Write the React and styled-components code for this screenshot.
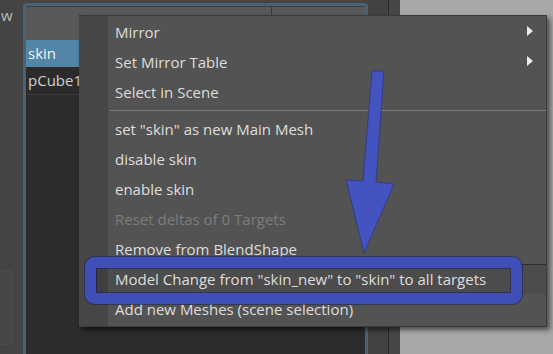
import React from "react";
import styled, { createGlobalStyle } from "styled-components";

const Global = createGlobalStyle`
  html, body { margin: 0; padding: 0; background: #444; }
  body { font-family: "Open Sans", "Noto Sans", sans-serif; }
`;

const Page = styled.div`
  position: relative;
  display: flex;
  width: 553px;
  height: 354px;
  overflow: hidden;
  background: #444444;
  font-family: "Open Sans", "Noto Sans", sans-serif;
`;

const LeftStrip = styled.div`
  width: 23px;
  flex: none;
  display: flex;
  flex-direction: column;
  justify-content: space-between;
  padding: 4px 0 9px 0;
  box-sizing: border-box;
`;

const CutLabel = styled.div`
  color: #bdbdbd;
  font-size: 15px;
  line-height: 22px;
  padding-left: 1px;
  white-space: nowrap;
`;

const GhostBox = styled.div`
  width: 12px;
  height: 75px;
  background: #474747;
  border: 1px solid #4c4c4c;
  border-left: none;
  box-sizing: border-box;
`;

const Panel = styled.div`
  margin-top: 3px;
  width: 345px;
  flex: none;
  border: 3px solid #4a6274;
  border-bottom: none;
  border-radius: 4px 4px 0 0;
  box-sizing: border-box;
  background: #2c2c2c;
  display: flex;
  flex-direction: column;
`;

const PanelHeader = styled.div`
  height: 34px;
  background: #595959;
  border-top: 1px solid #3d3d3d;
  box-sizing: border-box;
  display: grid;
  grid-template-columns: 246px 1fr;
`;

const HeaderCell = styled.div`
  border-right: ${(p) => (p.$divider ? "1px solid #3a3a3a" : "none")};
`;

const ListRow = styled.div`
  height: 27px;
  line-height: 27px;
  padding-left: 2px;
  font-size: 15px;
  color: ${(p) => (p.$selected ? "#f2f2f2" : "#cfcfcf")};
  background: ${(p) => (p.$selected ? "#5285a6" : "#2b2b2b")};
  border-bottom: ${(p) => (p.$selected ? "none" : "1px solid #3a3a3a")};
  white-space: nowrap;
  overflow: hidden;
`;

const SideColumn = styled.div`
  width: 32px;
  flex: none;
  display: grid;
  grid-template-columns: 20px 1px 1fr;
`;

const SideCell = styled.div`
  background: ${(p) => p.$bg};
`;

const LightArea = styled.div`
  flex: 1;
  background: #a8a8a8;
`;

const Menu = styled.div`
  position: absolute;
  left: 79px;
  top: 15px;
  width: 468px;
  box-sizing: border-box;
  padding: 1px 0 2px 0;
  background: linear-gradient(to right, #464646 0 29px, #535353 29px);
  border: 1px solid #3a3a3a;
  border-left: none;
  box-shadow: 3px 3px 5px rgba(0, 0, 0, 0.55);
  font-size: 15px;
`;

const Item = styled.div`
  position: relative;
  height: 30px;
  line-height: 30px;
  padding-left: 36px;
  color: ${(p) => (p.$disabled ? "#7c7c7c" : "#dedede")};
  white-space: nowrap;
  ${(p) =>
    p.$hover &&
    `
    margin: 0 0 0 17px;
    padding-left: 19px;
    background: linear-gradient(to right, #3f3f3f 0 12px, #4c4c4c 12px);
    box-shadow: inset 0 1px 0 #2f2f2f, inset 1px 0 0 #2f2f2f;
  `}
`;

const SubArrow = styled.span`
  position: absolute;
  right: 13px;
  top: 9px;
  width: 0;
  height: 0;
  border-top: 5.5px solid transparent;
  border-bottom: 5.5px solid transparent;
  border-left: 6px solid #ececec;
`;

const Separator = styled.div`
  height: 7px;
  margin-left: 31px;
  display: flex;
  align-items: center;
  &::after {
    content: "";
    flex: 1;
    height: 1px;
    background: #7a7a7a;
  }
`;

const HighlightFrame = styled.div`
  position: absolute;
  left: 85px;
  top: 257px;
  width: 437px;
  height: 47px;
  box-sizing: border-box;
  border: 11px solid #3f4fb8;
  border-radius: 10px;
  box-shadow: 0 0 0 1px rgba(30, 36, 90, 0.6), inset 0 0 0 1px rgba(30, 36, 90, 0.6);
  pointer-events: none;
`;

const ArrowSvg = styled.svg`
  position: absolute;
  left: 340px;
  top: 66px;
  width: 60px;
  height: 192px;
  pointer-events: none;
`;

const items = [
  { label: "Mirror", sub: true },
  { label: "Set Mirror Table", sub: true },
  { label: "Select in Scene" },
  { sep: true },
  { label: 'set "skin" as new Main Mesh' },
  { label: "disable skin" },
  { label: "enable skin" },
  { label: "Reset deltas of 0 Targets", disabled: true },
  { label: "Remove from BlendShape" },
  { label: 'Model Change from "skin_new" to "skin" to all targets', hover: true },
  { label: "Add new Meshes (scene selection)" },
];

export default function App() {
  return (
    <>
      <Global />
      <Page>
        <LeftStrip>
          <CutLabel>w</CutLabel>
          <GhostBox />
        </LeftStrip>
        <Panel>
          <PanelHeader>
            <HeaderCell $divider />
            <HeaderCell />
          </PanelHeader>
          <ListRow $selected>skin</ListRow>
          <ListRow>pCube1</ListRow>
        </Panel>
        <SideColumn>
          <SideCell $bg="#424242" />
          <SideCell $bg="#2a2a2a" />
          <SideCell $bg="#474747" />
        </SideColumn>
        <LightArea />

        <Menu>
          {items.map((it, i) =>
            it.sep ? (
              <Separator key={i} />
            ) : (
              <Item key={i} $disabled={it.disabled} $hover={it.hover}>
                {it.label}
                {it.sub && <SubArrow />}
              </Item>
            )
          )}
        </Menu>

        <HighlightFrame />

        <ArrowSvg viewBox="340 66 60 192">
          <polygon
            points="372,71 384,71 376,182 394,184 364,253 346,180 363,181"
            fill="#4354c0"
            stroke="#2c3780"
            strokeWidth="0.8"
            strokeLinejoin="round"
          />
        </ArrowSvg>
      </Page>
    </>
  );
}
